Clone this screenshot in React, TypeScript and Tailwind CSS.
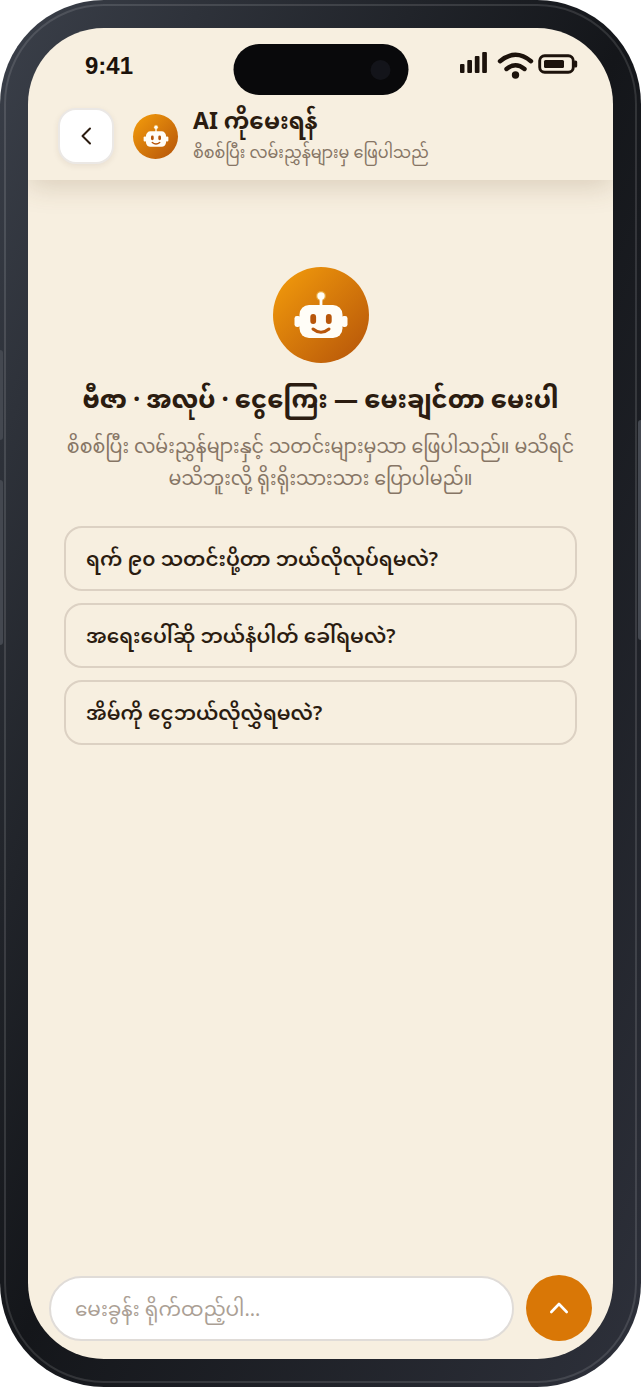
import { useState } from "react";
import type { FormEvent } from "react";

const suggestions = [
    "ရက် ၉၀ သတင်းပို့တာ ဘယ်လိုလုပ်ရမလဲ?",
    "အရေးပေါ်ဆို ဘယ်နံပါတ် ခေါ်ရမလဲ?",
    "အိမ်ကို ငွေဘယ်လိုလွှဲရမလဲ?",
];

function Robot({ className }: { className: string }) {
    return (
        <svg viewBox="0 0 60 60" className={className} aria-hidden="true">
            <circle cx="30" cy="11" r="5" fill="#fde68a" opacity="0.4" />
            <circle cx="30" cy="11" r="3.7" fill="#fffdf7" />
            <path d="M30 12v10" stroke="#fffdf7" strokeWidth="2.8" />
            <rect x="3.5" y="31" width="6" height="11" rx="2.4" fill="#fffdf7" />
            <rect x="50.5" y="31" width="6" height="11" rx="2.4" fill="#fffdf7" />
            <rect x="8.5" y="20" width="43" height="33" rx="9.5" fill="#fffdf7" />
            <rect x="19.3" y="29" width="5.8" height="10" rx="2.9" fill="#b8560a" />
            <rect x="34.9" y="29" width="5.8" height="10" rx="2.9" fill="#b8560a" />
            <path d="M22 44q8 6.500 16 0" fill="none" stroke="#b8560a" strokeWidth="3" strokeLinecap="round" />
        </svg>
    );
}

function StatusBar() {
    return (
        <div className="flex h-[76px] items-start justify-between pt-[22px] pr-[33px] pl-[57px] text-[#1c120b]">
            <span className="pt-0.5 font-['Liberation_Sans',sans-serif] text-2xl leading-7 font-bold">9:41</span>
            <svg viewBox="0 0 122 30" className="h-[30px] w-[122px]" fill="currentColor" aria-hidden="true">
                <rect x="2" y="14" width="4.5" height="9" rx="1" />
                <rect x="9.3" y="10" width="4.7" height="13" rx="1" />
                <rect x="16.8" y="6" width="4.7" height="17" rx="1" />
                <rect x="24.2" y="2" width="4.7" height="21" rx="1" />
                <path d="M42 11.200Q57.500-1.600 73 11.200M48.500 19q9-7.500 18 0" fill="none" stroke="currentColor" strokeWidth="4.400" strokeLinecap="round" />
                <circle cx="57.500" cy="25" r="3.700" />
                <rect x="81.700" y="5.700" width="33.600" height="16.600" rx="5" fill="none" stroke="currentColor" strokeWidth="2.900" />
                <rect x="86" y="10" width="20" height="8" rx="1.500" />
                <rect x="116" y="10.500" width="3.200" height="7" rx="1.500" />
            </svg>
        </div>
    );
}

function Header() {
    return (
        <header className="shadow-[0_6px_27px_rgba(100,70,35,0.2)]">
            <StatusBar />
            <div className="flex items-center pr-6 pb-3 pl-[30px]">
                <button type="button" aria-label="Back" className="flex size-14 shrink-0 items-center justify-center rounded-[18px] border-2 border-[#ebe8e5] bg-white shadow-[0_2px_6px_rgba(60,40,20,0.08)]">
                    <svg viewBox="0 0 24 24" className="size-6" fill="none" stroke="#2b1c10" strokeWidth="2" strokeLinecap="round" strokeLinejoin="round">
                        <path d="M16 4.500 8.500 12l7.500 7.500" />
                    </svg>
                </button>
                <div className="ml-[19px] flex size-[45px] shrink-0 items-center justify-center rounded-full bg-linear-135 from-[#f59e0b] to-[#b45309]">
                    <Robot className="size-7" />
                </div>
                <div className="ml-[15px] min-w-0">
                    <h1 className="text-[23px] leading-8 font-bold">AI ကိုမေးရန်</h1>
                    <p className="text-base leading-8 text-[#867565]">စိစစ်ပြီး လမ်းညွှန်များမှ ဖြေပါသည်</p>
                </div>
            </div>
        </header>
    );
}

export default function App() {
    const [question, setQuestion] = useState("");

    function onSubmit(e: FormEvent) {
        e.preventDefault();
        setQuestion("");
    }

    return (
        <div className="relative flex min-h-screen rounded-[104px] bg-linear-to-br from-[#3b404a] via-[#14161a] to-[#2e313b] p-7 font-['Noto_Sans','Noto_Sans_Myanmar',sans-serif] text-[#2b1c10]">
            <div className="pointer-events-none absolute inset-1 rounded-[100px] border-2 border-white/12" />
            <div className="absolute top-[350px] left-0 h-[90px] w-[3px] rounded-r bg-[#444850]" />
            <div className="absolute top-[480px] left-0 h-[165px] w-[3px] rounded-r bg-[#444850]" />
            <div className="absolute top-[420px] right-0 h-[220px] w-[3px] rounded-l bg-[#444850]" />

            <div className="relative flex min-w-0 flex-1 flex-col overflow-hidden rounded-[76px] bg-[#f7efe0]">
                <div className="absolute top-4 left-1/2 flex h-[51px] w-[175px] -translate-x-1/2 items-center justify-end rounded-full bg-[#09090b] pr-[18px]">
                    <span className="size-5 rounded-full bg-[#13141a]" />
                </div>
                <Header />

                <main className="flex flex-1 flex-col items-center px-9 pt-[87px]">
                    <div className="flex size-24 items-center justify-center rounded-full bg-linear-135 from-[#f59e0b] to-[#b45309]">
                        <Robot className="size-15" />
                    </div>
                    <h2 className="mt-4 text-center text-2xl leading-10 font-extrabold">ဗီဇာ · အလုပ် · ငွေကြေး — မေးချင်တာ မေးပါ</h2>
                    <p className="mt-[11px] text-center text-[19px] leading-8 text-[#867565]">
                        စိစစ်ပြီး လမ်းညွှန်များနှင့် သတင်းများမှသာ ဖြေပါသည်။ မသိရင် မသိဘူးလို့ ရိုးရိုးသားသား ပြောပါမည်။
                    </p>
                    <ul className="mt-8 flex w-full flex-col gap-3">
                        {suggestions.map((text) => (
                            <li key={text}>
                                <button type="button" onClick={() => setQuestion(text)} className="h-[65px] w-full rounded-[18px] border-2 border-[#dcd1c3] px-5 text-left text-xl font-semibold">
                                    {text}
                                </button>
                            </li>
                        ))}
                    </ul>
                </main>

                <form onSubmit={onSubmit} className="flex items-center gap-3 px-[21px] pb-[18px]">
                    <input
                        type="text"
                        aria-label="မေးခွန်း"
                        placeholder="မေးခွန်း ရိုက်ထည့်ပါ…"
                        value={question}
                        onChange={(e) => setQuestion(e.target.value)}
                        className="h-[65px] min-w-0 flex-1 rounded-full border-2 border-[#e0dcd8] bg-white px-6 text-xl placeholder:text-[#ab9f95] focus:outline-none"
                    />
                    <button type="submit" aria-label="Send" className="flex size-[66px] shrink-0 items-center justify-center rounded-full bg-[#d97706]">
                        <svg viewBox="0 0 24 24" className="size-6" fill="none" stroke="white" strokeWidth="2.600" strokeLinecap="round" strokeLinejoin="round">
                            <path d="m4.300 16 7.700-8 7.700 8" />
                        </svg>
                    </button>
                </form>
            </div>
        </div>
    );
}
